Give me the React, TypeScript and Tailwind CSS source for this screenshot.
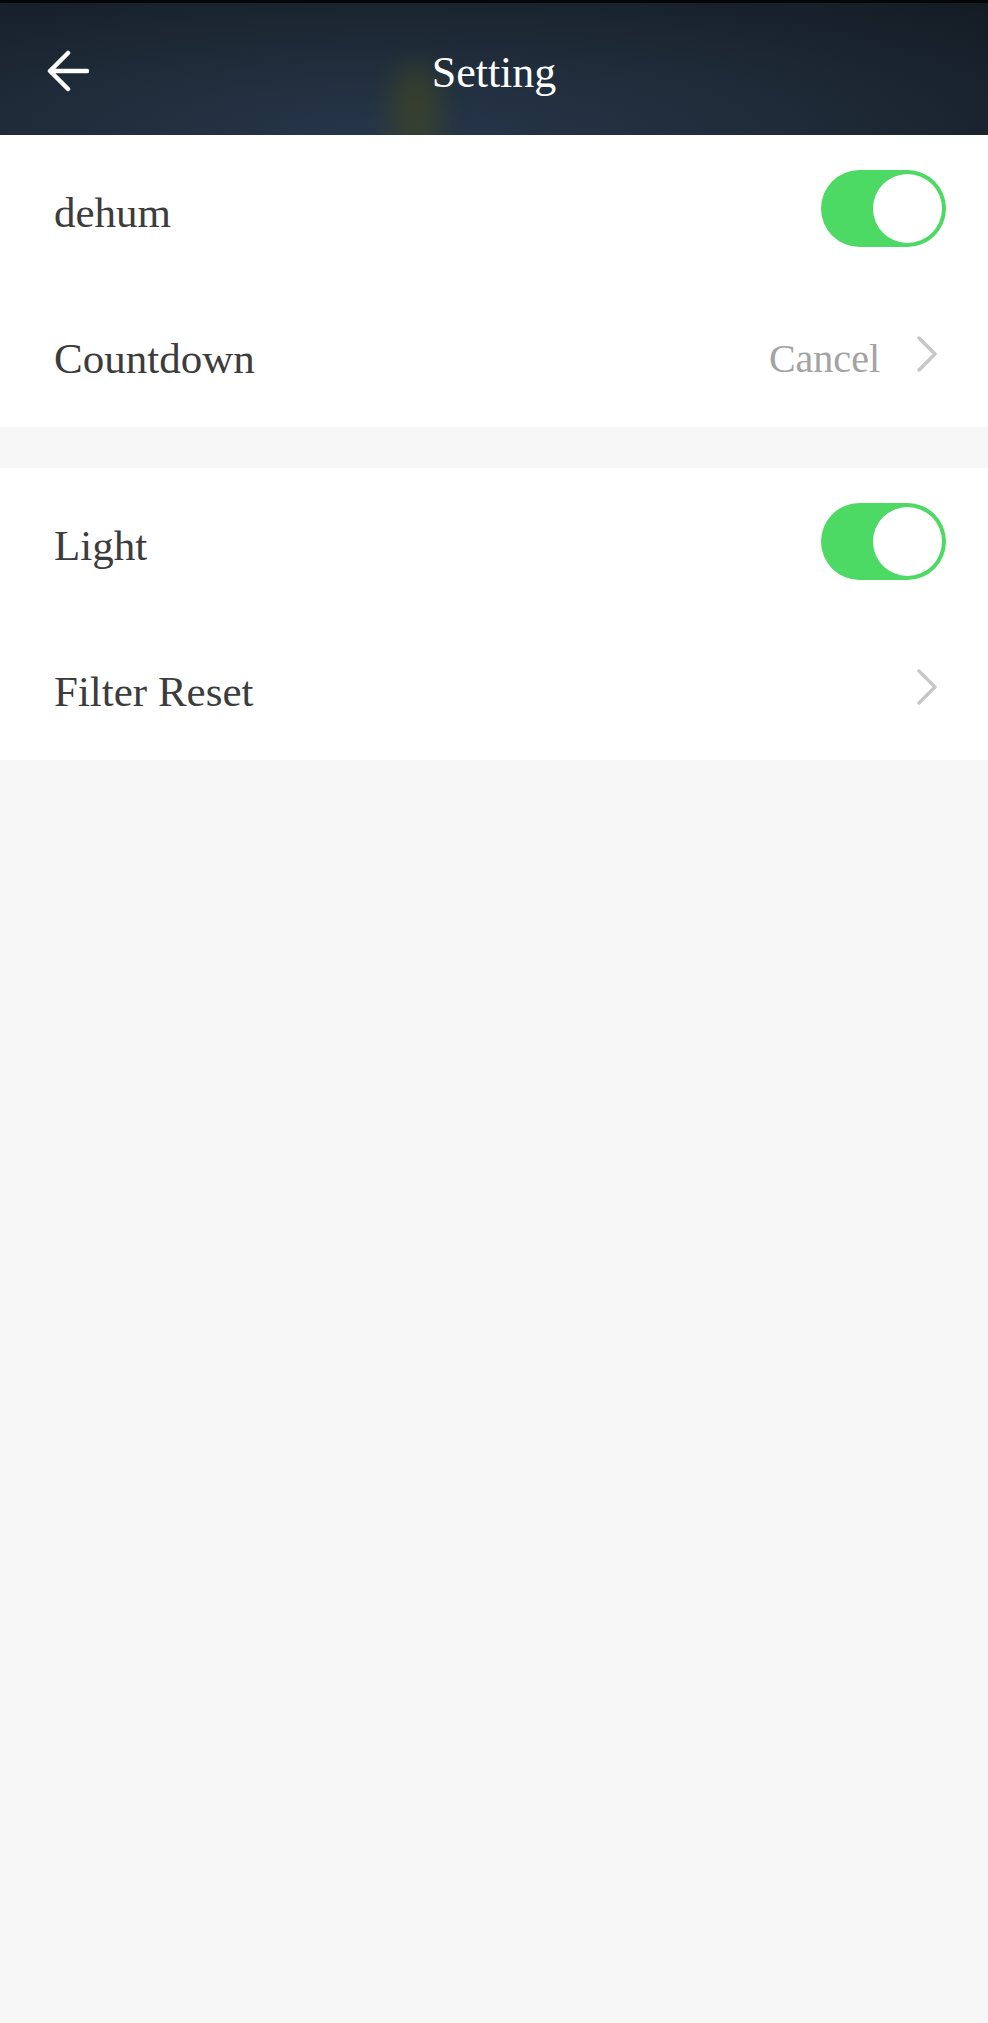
import { useState } from 'react';

function Toggle({ on, onChange }: { on: boolean; onChange: () => void }) {
    return (
        <button
            onClick={onChange}
            className={`flex h-[77px] w-[125px] items-center rounded-full p-[4px] transition-colors ${on ? 'justify-end bg-[#4cd964]' : 'justify-start bg-[#e5e5e5]'}`}
        >
            <span className="block h-[69px] w-[69px] rounded-full bg-white" />
        </button>
    );
}

function Chevron() {
    return (
        <svg width="22" height="36" viewBox="0 0 22 36" fill="none">
            <path d="M3 2 L19 18 L3 34" stroke="#c7c7c7" strokeWidth="3.5" strokeLinecap="round" strokeLinejoin="round" />
        </svg>
    );
}

export default function App() {
    const [dehum, setDehum] = useState(true);
    const [light, setLight] = useState(true);

    const rowClass = "flex h-[146px] items-center justify-between pl-[54px] pr-[42px]";
    const labelClass = "pt-[10px] text-[43px] text-[#3c3c3c]";

    return (
        <div className="min-h-[2023px] bg-[#f7f7f7]" style={{ fontFamily: '"Liberation Serif", "DejaVu Serif", serif' }}>
            <header className="relative flex h-[135px] items-center justify-center overflow-hidden border-t-[3px] border-[#050608] bg-[radial-gradient(ellipse_at_40%_100%,#26364a_0%,#1e2a37_50%,#141b23_100%)]">
                <div className="absolute bottom-[-20px] left-[392px] h-[90px] w-[48px] rounded-full bg-[#3f4526] opacity-70 blur-[14px]" />
                <button className="absolute left-[47px] top-[47px]">
                    <svg width="42" height="42" viewBox="0 0 42 42" fill="none">
                        <path d="M40 21 H4 M21 3 L3 21 L21 39" stroke="white" strokeWidth="4.5" strokeLinecap="round" strokeLinejoin="round" />
                    </svg>
                </button>
                <h1 className="relative pt-[8px] text-[44px] text-white">Setting</h1>
            </header>

            <section className="bg-white">
                <div className={rowClass}>
                    <span className={labelClass}>dehum</span>
                    <Toggle on={dehum} onChange={() => setDehum(!dehum)} />
                </div>
                <div className={rowClass}>
                    <span className={labelClass}>Countdown</span>
                    <div className="flex items-center gap-[36px] pr-[8px]">
                        <span className="pt-[10px] text-[40px] text-[#a3a3a3]">Cancel</span>
                        <Chevron />
                    </div>
                </div>
            </section>

            <div className="h-[41px]" />

            <section className="bg-white">
                <div className={rowClass}>
                    <span className={labelClass}>Light</span>
                    <Toggle on={light} onChange={() => setLight(!light)} />
                </div>
                <div className={rowClass}>
                    <span className={labelClass}>Filter Reset</span>
                    <div className="pr-[8px]">
                        <Chevron />
                    </div>
                </div>
            </section>
        </div>
    );
}
